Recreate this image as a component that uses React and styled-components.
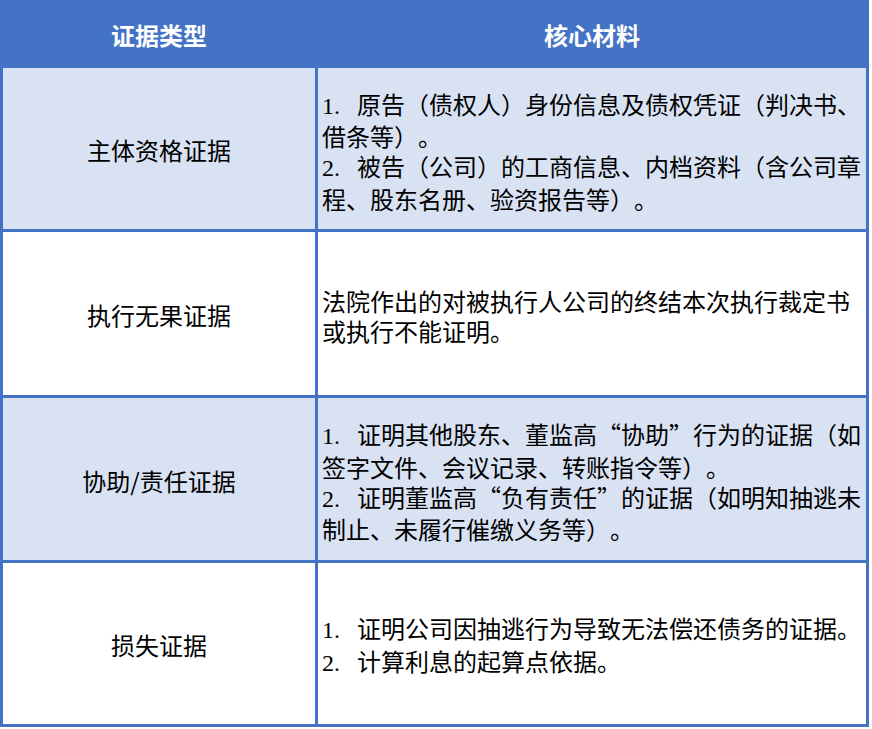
import React from "react";
import styled, { createGlobalStyle } from "styled-components";

const GlobalStyle = createGlobalStyle`
  html, body {
    margin: 0;
    padding: 0;
    background: #ffffff;
  }
  body {
    font-family: "Noto Sans CJK SC", "Liberation Sans", sans-serif;
    text-spacing-trim: space-all;
  }
`;

const Table = styled.div`
  width: 869px;
  box-sizing: border-box;
  padding: 3px;
  background: #4472c4;
  display: grid;
  grid-template-columns: 312px 548px;
  grid-template-rows: 62px 161px 163px 162px 161px;
  gap: 3px;
`;

const HeadCell = styled.div`
  display: flex;
  align-items: center;
  justify-content: center;
  background: #4472c4;
  color: #ffffff;
  font-size: 24px;
  font-weight: 700;
`;

const TypeCell = styled.div`
  display: flex;
  align-items: center;
  justify-content: center;
  padding-top: 3px;
  box-sizing: border-box;
  background: ${(p) => (p.$shaded ? "#d9e2f3" : "#ffffff")};
  color: #000000;
  font-size: 24px;
  line-height: 30px;
`;

const TextCell = styled.div`
  display: flex;
  flex-direction: column;
  justify-content: center;
  padding: 5px 3px 0 4px;
  box-sizing: border-box;
  background: ${(p) => (p.$shaded ? "#d9e2f3" : "#ffffff")};
  color: #000000;
  font-size: 24px;
  line-height: 29.7px;
  text-spacing-trim: space-all;
`;

const Para = styled.p`
  margin: 0;
`;

const Num = styled.span`
  display: inline-block;
  width: 35px;
  font-family: "Liberation Serif", serif;
`;

const rows = [
  {
    type: "主体资格证据",
    items: [
      "原告（债权人）身份信息及债权凭证（判决书、借条等）。",
      "被告（公司）的工商信息、内档资料（含公司章程、股东名册、验资报告等）。",
    ],
  },
  {
    type: "执行无果证据",
    text: "法院作出的对被执行人公司的终结本次执行裁定书或执行不能证明。",
  },
  {
    type: "协助/责任证据",
    items: [
      "证明其他股东、董监高“协助”行为的证据（如签字文件、会议记录、转账指令等）。",
      "证明董监高“负有责任”的证据（如明知抽逃未制止、未履行催缴义务等）。",
    ],
  },
  {
    type: "损失证据",
    items: [
      "证明公司因抽逃行为导致无法偿还债务的证据。",
      "计算利息的起算点依据。",
    ],
  },
];

const App = () => {
  return (
    <>
      <GlobalStyle />
      <Table>
        <HeadCell>证据类型</HeadCell>
        <HeadCell>核心材料</HeadCell>
        {rows.map((row, i) => (
          <React.Fragment key={row.type}>
            <TypeCell $shaded={i % 2 === 0}>{row.type}</TypeCell>
            <TextCell $shaded={i % 2 === 0}>
              {row.items ? (
                row.items.map((item, j) => (
                  <Para key={j}>
                    <Num>{j + 1}.</Num>
                    {item}
                  </Para>
                ))
              ) : (
                <Para>{row.text}</Para>
              )}
            </TextCell>
          </React.Fragment>
        ))}
      </Table>
    </>
  );
};

export default App;
